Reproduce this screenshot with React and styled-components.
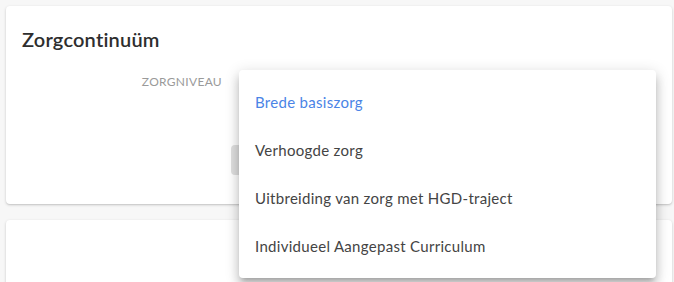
import React, { useState } from 'react'
import styled, { createGlobalStyle } from 'styled-components'

const GlobalStyle = createGlobalStyle`
  html, body {
    margin: 0;
    padding: 0;
    background: #f7f7f7;
    font-family: Lato, "Open Sans", sans-serif;
    overflow: hidden;
  }
`

const Page = styled.div`
  display: flex;
  flex-direction: column;
  gap: 16px;
  padding: 6px 2px 0 6px;
  height: 282px;
  box-sizing: border-box;
  overflow: hidden;
`

const Card = styled.section`
  position: relative;
  background: #fff;
  border-radius: 4px;
  box-shadow: 0 1px 3px rgba(0, 0, 0, 0.18), 0 1px 1px rgba(0, 0, 0, 0.06);
  padding: 21px 16px 0;
  height: ${props => props.height};
  box-sizing: border-box;
  flex-shrink: 0;
`

const CardTitle = styled.h2`
  margin: 0;
  font-size: 20px;
  line-height: 24px;
  font-weight: 600;
  color: #2e2e2e;
  letter-spacing: 0.2px;
`

const FieldRow = styled.div`
  position: relative;
  display: grid;
  grid-template-columns: 200px 1fr;
  column-gap: 16px;
  margin-top: 23px;
`

const FieldLabel = styled.label`
  text-align: right;
  font-size: 12px;
  line-height: 16px;
  color: #9a9a9a;
  text-transform: uppercase;
  letter-spacing: 0.3px;
`

const Actions = styled.div`
  display: flex;
  padding-left: 209px;
  margin-top: 55px;
`

const GreyButton = styled.button`
  width: 140px;
  height: 30px;
  border: none;
  border-radius: 4px;
  background: #e0e0e0;
`

const GhostField = styled.div`
  position: relative;
  z-index: 2;
  margin: 22px 0 0 200px;
  width: 20px;
  height: 20px;
  background: #fff;
`

const Menu = styled.ul`
  position: absolute;
  z-index: 3;
  left: 217px;
  top: -4px;
  width: 417px;
  margin: 0;
  padding: 8px 0;
  list-style: none;
  background: #fff;
  border-radius: 4px;
  box-shadow: 0px 5px 5px -3px rgba(0, 0, 0, 0.2), 0px 8px 10px 1px rgba(0, 0, 0, 0.14), 0px 3px 14px 2px rgba(0, 0, 0, 0.12);
`

const MenuItem = styled.li`
  height: 48px;
  display: flex;
  align-items: center;
  padding: 0 16px;
  font-size: 15px;
  letter-spacing: 0.3px;
  color: ${props => (props.selected ? '#4a84e6' : '#444')};
  cursor: pointer;
`

const options = [
  'Brede basiszorg',
  'Verhoogde zorg',
  'Uitbreiding van zorg met HGD-traject',
  'Individueel Aangepast Curriculum'
]

const App = () => {
  const [selected, setSelected] = useState(0)

  return (
    <>
      <GlobalStyle />
      <Page>
        <Card height="198px">
          <CardTitle>Zorgcontinuüm</CardTitle>
          <FieldRow>
            <FieldLabel>Zorgniveau</FieldLabel>
            <div />
            <Menu>
              {options.map((opt, i) => (
                <MenuItem key={opt} selected={i === selected} onClick={() => setSelected(i)}>
                  {opt}
                </MenuItem>
              ))}
            </Menu>
          </FieldRow>
          <Actions>
            <GreyButton />
          </Actions>
        </Card>
        <Card height="80px">
          <GhostField />
        </Card>
      </Page>
    </>
  )
}

export default App
